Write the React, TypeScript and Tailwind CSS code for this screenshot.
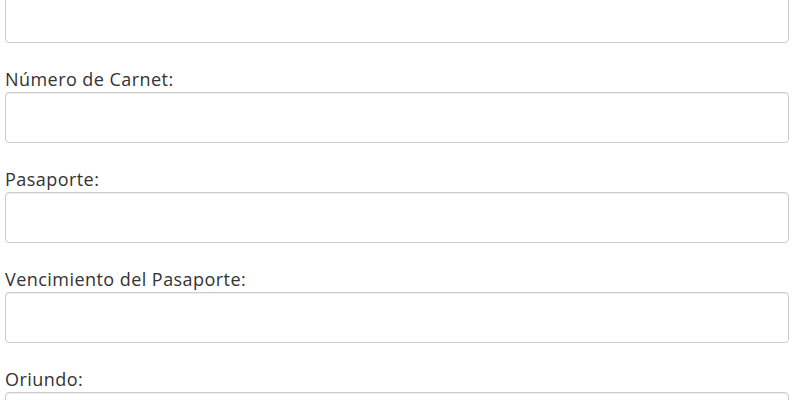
const fields = ['Número de Carnet:', 'Pasaporte:', 'Vencimiento del Pasaporte:', 'Oriundo:']

function Field({ label }: { label: string }) {
  return (
    <div className="mt-[25px]">
      <label className="mb-[1px] block text-[18px] leading-[23px] tracking-[0.45px] text-[#333]">{label}</label>
      <input
        type="text"
        className="block h-[51px] w-full rounded-[4px] border border-[#ccc] bg-white px-3 shadow-[inset_0_1px_1px_rgba(0,0,0,0.075)] outline-none"
      />
    </div>
  )
}

export default function App() {
  return (
    <div
      className="h-[400px] w-[811px] overflow-hidden bg-white pl-[5px] pr-[22px]"
      style={{ fontFamily: '"Open Sans", sans-serif' }}
    >
      <div className="-mt-[8px]">
        <input
          type="text"
          className="block h-[51px] w-full rounded-[4px] border border-[#ccc] bg-white px-3 shadow-[inset_0_1px_1px_rgba(0,0,0,0.075)] outline-none"
        />
        {fields.map((f) => (
          <Field key={f} label={f} />
        ))}
      </div>
    </div>
  )
}
